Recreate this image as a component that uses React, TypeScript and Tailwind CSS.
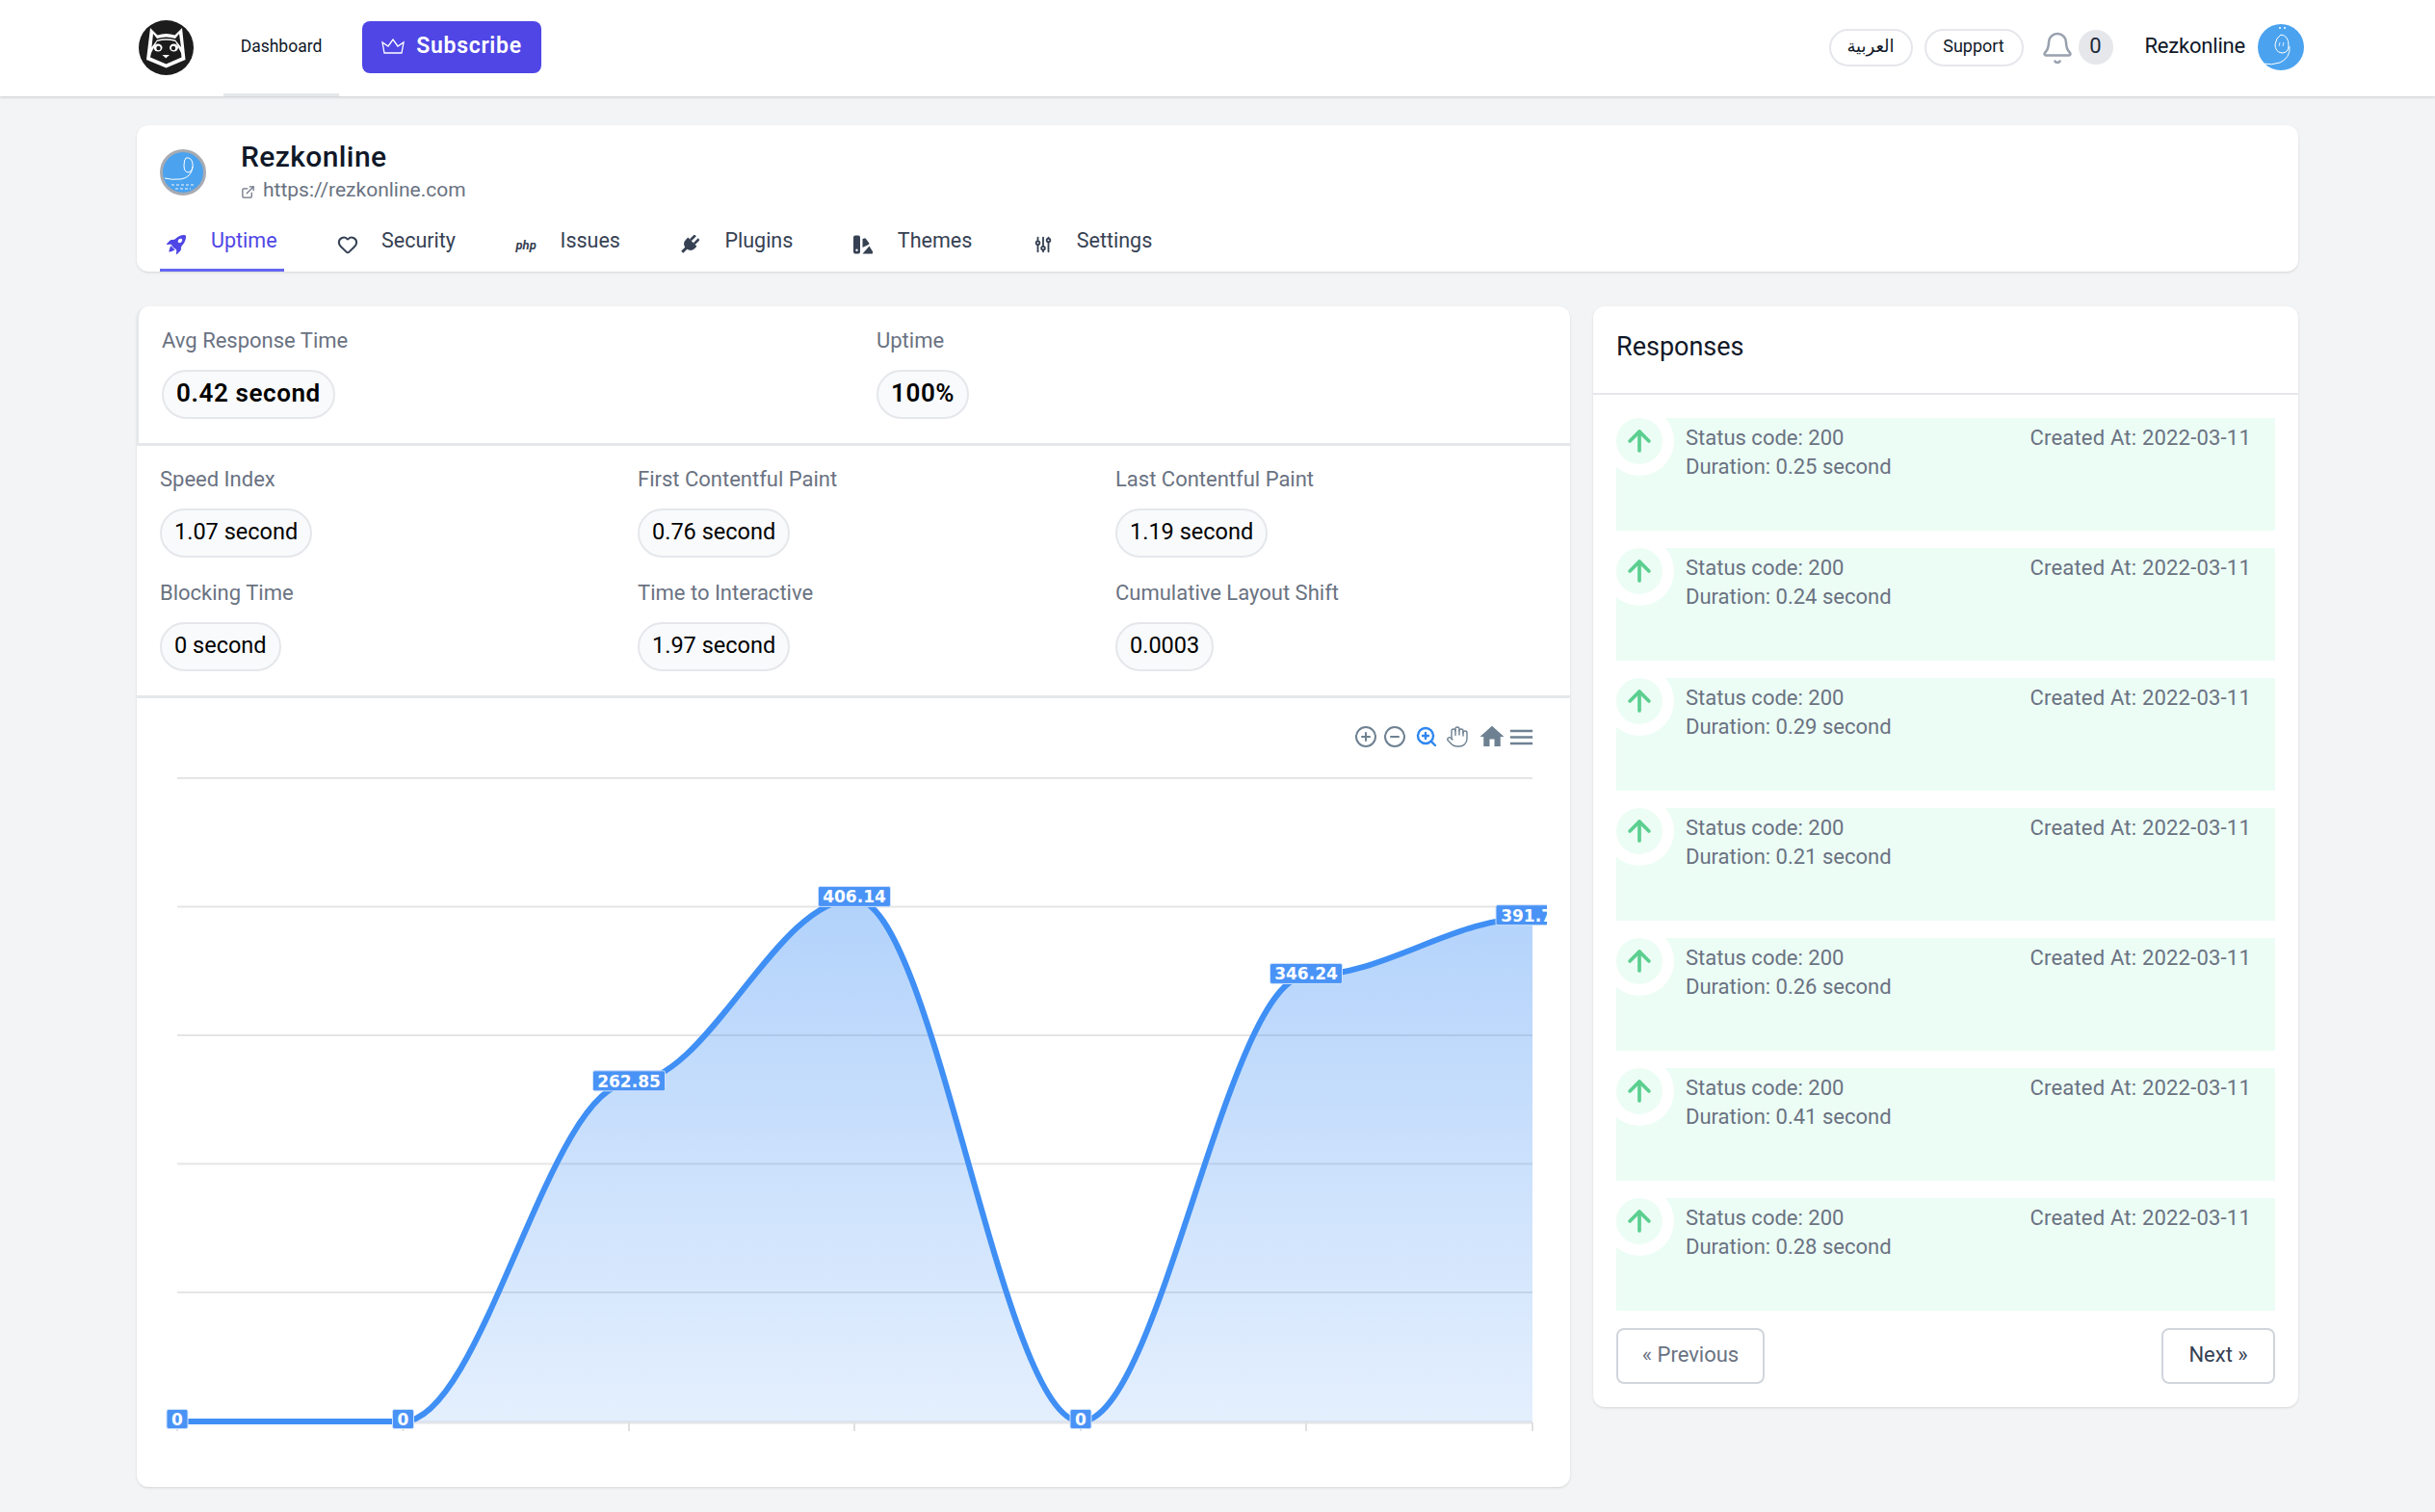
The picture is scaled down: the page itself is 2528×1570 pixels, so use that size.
import type { ReactNode } from 'react';
import { ArrowUp, Bell, CircleMinus, CirclePlus, ExternalLink, Hand, Heart, ZoomIn } from 'lucide-react';
import { BsRocketTakeoffFill } from 'react-icons/bs';
import { MdHome, MdMenu } from 'react-icons/md';
import { TbAdjustments } from 'react-icons/tb';

const chartPoints = [
  { x: 184, value: 0, label: '0', w: 22 },
  { x: 418.5, value: 0, label: '0', w: 22 },
  { x: 653, value: 262.85, label: '262.85', w: 75 },
  { x: 887, value: 406.14, label: '406.14', w: 75 },
  { x: 1122, value: 0, label: '0', w: 22 },
  { x: 1356, value: 346.24, label: '346.24', w: 75 },
  { x: 1591, value: 391.72, label: '391.72', w: 76 },
];

const baseY = 1476;
const toY = (value: number) => baseY - (value / 500) * 668;

// same curve as the chart lib: flat tangent at every point
function buildLine() {
  let d = `M${chartPoints[0].x},${toY(chartPoints[0].value)}`;
  for (let i = 1; i < chartPoints.length; i++) {
    const a = chartPoints[i - 1];
    const b = chartPoints[i];
    const step = (b.x - a.x) * 0.35;
    d += ` C${a.x + step},${toY(a.value)} ${b.x - step},${toY(b.value)} ${b.x},${toY(b.value)}`;
  }
  return d;
}

const responses = ['0.25', '0.24', '0.29', '0.21', '0.26', '0.41', '0.28'];

function SwatchIcon() {
  return (
    <svg width="20" height="20" viewBox="0 0 20 20" fill="currentColor">
      <path fillRule="evenodd" d="M2 0.5 H5 a2 2 0 0 1 2 2 V17.5 a2 2 0 0 1 -2 2 H2 a2 2 0 0 1 -2 -2 V2.5 a2 2 0 0 1 2 -2 Z M3.5 14.5 a1.2 1.2 0 1 0 0.01 0 Z" />
      <path d="M9.5 4 L11.5 3.4 a1.5 1.5 0 0 1 1.5 0.6 L16 8 a1.5 1.5 0 0 1 -0.3 2 L9.5 13 Z" />
      <path d="M9.5 19.5 L16.5 11.5 L19.5 16.5 a2 2 0 0 1 0 3 Z" />
    </svg>
  );
}

function PlugIcon() {
  return (
    <svg width="20" height="20" viewBox="0 0 20 20" fill="currentColor">
      <g transform="rotate(45 10 10)">
        <rect x="6" y="-1" width="2.6" height="7" />
        <rect x="11.4" y="-1" width="2.6" height="7" />
        <path d="M3.5 6 H16.5 V9 a6.5 6.5 0 0 1 -5 6.3 V21 H8.5 V15.3 a6.5 6.5 0 0 1 -5 -6.3 Z" />
      </g>
    </svg>
  );
}

const tabs: { label: string; icon: ReactNode; active?: boolean }[] = [
  { label: 'Uptime', icon: <BsRocketTakeoffFill size={20} />, active: true },
  { label: 'Security', icon: <Heart size={22} strokeWidth={2.2} /> },
  { label: 'Issues', icon: <span className="text-[13px] font-bold italic leading-none">php</span> },
  { label: 'Plugins', icon: <PlugIcon /> },
  { label: 'Themes', icon: <SwatchIcon /> },
  { label: 'Settings', icon: <TbAdjustments size={22} /> },
];

function Logo() {
  return (
    <svg width="57" height="57" viewBox="0 0 57 57" className="-mt-[2px] shrink-0">
      <circle cx="28.5" cy="28.5" r="28.5" fill="#1c1c1c" />
      <path d="M12 8 L19.5 15.5 Q28.5 12.5 37.5 15.5 L45 8 L48.5 41 L28.5 49.5 L8 41 Z" fill="white" />
      <path d="M15 14 L19 19 Q28.5 16 38 19 L42 14 L44 28 L38 20.5 Q28.5 18 19 20.5 L13.5 28 Z" fill="#1c1c1c" />
      <path d="M19 22 Q28.5 19.5 38 22 L44 34 L44.5 38.5 L28.5 45.5 L12 38.5 L13 34 Z" fill="#1c1c1c" />
      <ellipse cx="20" cy="28.5" rx="4.5" ry="4" fill="white" />
      <ellipse cx="36.5" cy="28.5" rx="4.5" ry="4" fill="white" />
      <circle cx="20.5" cy="29" r="2.2" fill="#1c1c1c" />
      <circle cx="36" cy="29" r="2.2" fill="#1c1c1c" />
      <path d="M24.5 36 H32 L28.2 39.5 Z" fill="white" />
    </svg>
  );
}

function SiteAvatar() {
  return (
    <svg width="48" height="48" viewBox="0 0 48 48" className="shrink-0">
      <circle cx="24" cy="24" r="22.5" fill="#4ba3ef" stroke="#a8abb2" strokeWidth="3" />
      <path d="M27 9 Q33 8 34 15 Q35 22 30 24 Q25 24 25 17 Q25 11 27 9 Z M34 18 Q33 29 22 31 Q12 32 5 30" fill="none" stroke="white" strokeWidth="1" />
      <path d="M12 37 H36 M16 41 H32" stroke="#bcdcf8" strokeWidth="1.5" strokeDasharray="3 2" />
    </svg>
  );
}

function UserAvatar() {
  return (
    <svg width="48" height="48" viewBox="0 0 48 48" className="shrink-0">
      <circle cx="24" cy="24" r="24" fill="#4ba3ef" />
      <circle cx="23" cy="4" r="1" fill="white" />
      <circle cx="28" cy="4" r="1" fill="white" />
      <path d="M24 11 Q32 12 32 22 Q32 30 25 30 Q18 29 18 21 Q19 14 24 11 Z M33 23 Q34 35 23 40 Q14 43 6 41" fill="none" stroke="white" strokeWidth="1" />
      <path d="M23 19 L22 23 M27 19 L26 23" stroke="white" strokeWidth="0.8" />
    </svg>
  );
}

function Metric({ label, value, bold }: { label: string; value: string; bold?: boolean }) {
  return (
    <div>
      <div className="text-[22px] leading-[30px] text-gray-500">{label}</div>
      <div className={`mt-[15px] inline-flex h-[51px] items-center rounded-full border-2 border-gray-200 bg-gray-50 px-[13px] pb-[2px] text-black ${bold ? 'text-[26px] font-semibold tracking-[0.6px]' : 'text-[23.5px]'}`}>
        {value}
      </div>
    </div>
  );
}

function Chart() {
  const line = buildLine();
  const last = chartPoints[chartPoints.length - 1];
  const area = `${line} L${last.x},${baseY} L${chartPoints[1].x},${baseY} Z`;

  return (
    <svg viewBox="142 790 1488 754" className="block w-full">
      <defs>
        <linearGradient id="areaFill" x1="0" y1="0" x2="0" y2="1">
          <stop offset="0" stopColor="#3f8ff5" stopOpacity="0.4" />
          <stop offset="1" stopColor="#3f8ff5" stopOpacity="0.14" />
        </linearGradient>
        <clipPath id="plotClip">
          <rect x="142" y="790" width="1464" height="754" />
        </clipPath>
      </defs>
      {[808, 941.5, 1075, 1208.5, 1342].map((y) => (
        <line key={y} x1="184" x2="1591" y1={y} y2={y} stroke="#e5e5e5" strokeWidth="2" />
      ))}
      <line x1="184" x2="1591" y1="1477" y2="1477" stroke="#e2e4e8" strokeWidth="3" />
      {chartPoints.map((p) => (
        <line key={p.x} x1={p.x} x2={p.x} y1="1477" y2="1486" stroke="#e0e0e0" strokeWidth="2" />
      ))}
      <path d={area} fill="url(#areaFill)" />
      <path d={line} fill="none" stroke="#3f8ff5" strokeWidth="6" />
      <g clipPath="url(#plotClip)">
        {chartPoints.map((p) => {
          const cy = toY(p.value) - 2.5;
          const h = p.label === '0' ? 20 : 21;
          return (
            <g key={p.x}>
              <rect x={p.x - p.w / 2} y={cy - h / 2} width={p.w} height={h} rx="2" fill="#4a93f6" stroke="#cfe2fb" strokeWidth="1" />
              <text x={p.x} y={cy + 6.5} textAnchor="middle" fill="white" fontSize="17" fontWeight="700" fontFamily="'DejaVu Sans', sans-serif">
                {p.label}
              </text>
            </g>
          );
        })}
      </g>
    </svg>
  );
}

export default function App() {
  return (
    <div className="min-h-screen bg-[#f3f4f6] font-[family-name:Roboto,'DejaVu_Sans',sans-serif]">
      <header className="flex h-[100px] items-center justify-between bg-white pl-[144px] pr-[136px] shadow-[0_1px_3px_rgba(0,0,0,0.18)]">
        <div className="flex h-full items-center">
          <Logo />
          <a className="ml-[31px] flex h-full w-[120px] items-center justify-center border-b-[3px] border-[#e5e7eb] text-[17.5px] text-gray-900">
            Dashboard
          </a>
          <button className="-mt-[2px] ml-[24px] flex h-[54px] w-[186px] items-center justify-center gap-[12px] rounded-lg bg-[#4f46e5] pb-[2px] text-[23px] font-semibold tracking-[0.7px] text-white">
            <svg width="24" height="16" viewBox="0 0 24 16" fill="none" stroke="white" strokeWidth="1.3">
              <path d="M3 15 L1 4 L7 8 L12 1 L17 8 L23 4 L21 15 Z" />
            </svg>
            Subscribe
          </button>
        </div>
        <div className="-mt-[2px] flex items-center">
          <button className="flex h-[39px] w-[87px] items-center justify-center rounded-full border-2 border-gray-200 pb-[3px] text-[18px] text-gray-900">العربية</button>
          <button className="ml-[12px] flex h-[39px] w-[103px] items-center justify-center rounded-full border-2 border-gray-200 pb-[3px] text-[18px] text-gray-900">Support</button>
          <Bell size={36} strokeWidth={1.7} className="ml-[17px] mt-[2px] text-gray-400" />
          <span className="ml-[4px] flex h-[36px] w-[36px] items-center justify-center rounded-full bg-gray-200 pb-[3px] text-[22px] text-gray-800">0</span>
          <span className="ml-[33px] pb-[4px] text-[22px] tracking-[-0.2px] text-gray-900">Rezkonline</span>
          <span className="ml-[13px]"><UserAvatar /></span>
        </div>
      </header>

      <main className="px-[142px] pb-[26px] pt-[30px]">
        <section className="h-[152px] rounded-xl bg-white pl-[24px] shadow-sm">
          <div className="flex h-[88px] items-center pt-[10px]">
            <SiteAvatar />
            <div className="ml-[36px]">
              <div className="text-[30px] font-medium leading-[34px] tracking-[0.4px] text-gray-900">Rezkonline</div>
              <div className="mt-[2px] flex items-center text-[21px] leading-[30px] text-gray-500">
                <ExternalLink size={15} className="mr-[8px] mt-[4px]" />
                https://rezkonline.com
              </div>
            </div>
          </div>
          <nav className="flex h-[64px] gap-[48.5px]">
            {tabs.map((tab) => (
              <a
                key={tab.label}
                className={`flex items-center border-b-[3px] px-[7px] pt-[3px] text-[21.5px] ${tab.active ? 'border-[#6366f1] text-[#4f46e5]' : 'border-transparent text-gray-700'}`}
              >
                <span className="mt-[8px] flex w-[46px] items-center">{tab.icon}</span>
                {tab.label}
              </a>
            ))}
          </nav>
        </section>

        <div className="mt-[36px] flex items-start gap-[24px]">
          <section className="w-[1488px] rounded-xl bg-white shadow-sm">
            <div className="grid grid-cols-[742px_1fr] rounded-tl-xl border-b-[3px] border-l-2 border-gray-200 pb-[25px] pl-[24px] pt-[21px]">
              <Metric label="Avg Response Time" value="0.42 second" bold />
              <Metric label="Uptime" value="100%" bold />
            </div>
            <div className="grid grid-cols-[496px_496px_1fr] gap-y-[22px] border-b-[3px] border-gray-200 pb-[25px] pl-[24px] pt-[20px]">
              <Metric label="Speed Index" value="1.07 second" />
              <Metric label="First Contentful Paint" value="0.76 second" />
              <Metric label="Last Contentful Paint" value="1.19 second" />
              <Metric label="Blocking Time" value="0 second" />
              <Metric label="Time to Interactive" value="1.97 second" />
              <Metric label="Cumulative Layout Shift" value="0.0003" />
            </div>
            <div className="flex h-[65px] items-start justify-end pr-[35px] pt-[28px] text-[#6e8192]">
              <CirclePlus size={24} />
              <CircleMinus size={24} className="ml-[6px]" />
              <ZoomIn size={24} strokeWidth={2.4} className="ml-[9px] text-[#2f86f0]" />
              <Hand size={24} strokeWidth={1.4} className="ml-[8px]" />
              <MdHome size={30} className="ml-[9px] -mt-[3px]" />
              <MdMenu size={31} className="-mt-[3px]" />
            </div>
            <Chart />
          </section>

          <section className="w-[732px] rounded-xl bg-white shadow-sm">
            <div className="flex h-[92px] items-center border-b-2 border-gray-200 pb-[6px] pl-[24px] text-[27px] text-gray-900">Responses</div>
            <div className="flex flex-col gap-[18px] px-[24px] pt-[24px]">
              {responses.map((duration) => (
                <div key={duration} className="flex h-[117px] overflow-hidden bg-[#ecfdf5] pr-[25px] text-[22px] leading-[30px] text-gray-500">
                  <span className="flex h-[48px] w-[48px] shrink-0 items-center justify-center rounded-full bg-[#ecfdf5] ring-[12px] ring-white">
                    <ArrowUp size={34} strokeWidth={2.6} className="text-[#5ccf90]" />
                  </span>
                  <div className="ml-[24px] flex-1 pt-[6px]">
                    <div>Status code: 200</div>
                    <div>Duration: {duration} second</div>
                  </div>
                  <div className="pt-[6px] tracking-[0.2px]">Created At: 2022-03-11</div>
                </div>
              ))}
            </div>
            <div className="flex justify-between px-[24px] pb-[24px] pt-[18px] text-[22px]">
              <button className="h-[58px] w-[154px] rounded-lg border-2 border-gray-300 pb-[4px] text-gray-500">« Previous</button>
              <button className="h-[58px] w-[118px] rounded-lg border-2 border-gray-300 pb-[4px] text-gray-700">Next »</button>
            </div>
          </section>
        </div>
      </main>
    </div>
  );
}
